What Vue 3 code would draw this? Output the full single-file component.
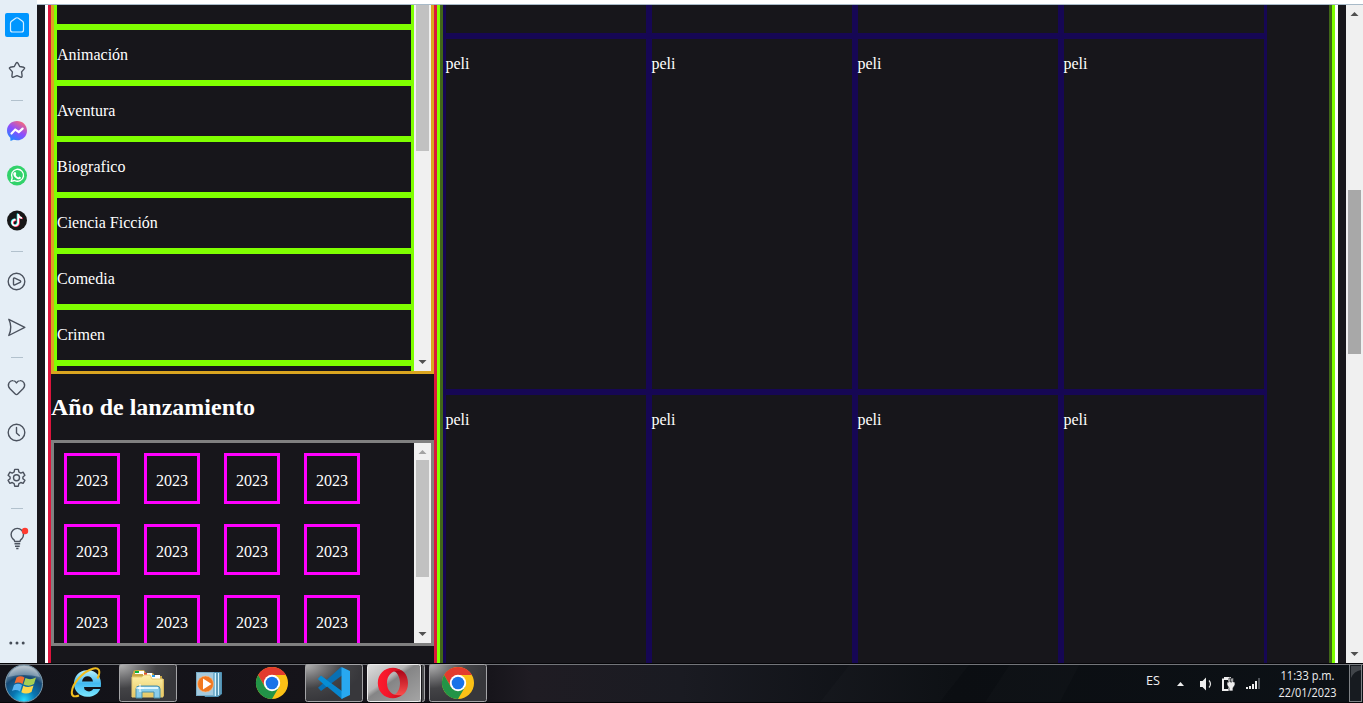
<script setup>
const genres = ['Animación', 'Aventura', 'Biografico', 'Ciencia Ficción', 'Comedia', 'Crimen']
const years = Array(12).fill('2023')
const movies = Array(8).fill('peli')
</script>

<template>
  <div class="screen">
    <div class="browser">
      <nav class="side">
        <svg width="37" height="663" viewBox="0 0 37 663" fill="none" stroke="#4b525e" stroke-width="1.4" stroke-linejoin="round" stroke-linecap="round">
          <defs>
            <linearGradient id="msg" x1="0.2" y1="1" x2="0.8" y2="0"><stop offset="0" stop-color="#168cff" /><stop offset=".5" stop-color="#8c4dff" /><stop offset="1" stop-color="#ff6a70" /></linearGradient>
          </defs>
          <rect x="5" y="13" width="24" height="24" rx="2" fill="#0096ff" stroke="none" />
          <path d="M10.5 23.2 Q10.5 22 11.5 21.2L15.6 18.2Q17 17.3 18.4 18.2L22.5 21.2Q23.5 22 23.5 23.2V30Q23.5 32 21.5 32H12.5Q10.5 32 10.5 30Z" stroke="#d8efff" stroke-width="1.2" />
          <path d="M16.1 63.1Q17 61.8 17.9 63.1L19.7 66.5L23.8 67.3Q25.2 67.8 24.2 68.9L21.6 71.9L22.1 76Q22 77.7 20.6 77.1L17 75.6L13.4 77.1Q12 77.7 11.9 76L12.4 71.9L9.8 68.9Q8.8 67.8 10.2 67.3L14.3 66.5Z" />
          <path d="M11 100.5H23M11 251.5H23M11 357.5H23M11 508.5H23" stroke="#b2c1cd" stroke-width="1" stroke-linecap="butt" />
          <path d="M17 121C11.3 121 7 125.100 7 130.600C7 133.600 8.300 136 10.300 137.700L10.500 141L13.600 139.800C14.700 140.100 15.800 140.300 17 140.300C22.700 140.300 27 136.200 27 130.700C27 125.100 22.700 121 17 121Z" fill="url(#msg)" stroke="none" />
          <path d="M11.5 133.500L15.200 129.600L18.800 132L22.600 128.600" stroke="#fff" stroke-width="2.200" stroke-linejoin="miter" />
          <circle cx="17" cy="175.500" r="10" fill="#32d26b" stroke="none" />
          <path d="M11.200 181.400L12.200 178A6 6 0 1 1 14.600 180.500Z" stroke="#fff" stroke-width="1.400" />
          <path d="M14.200 172.300L15.500 172L16.300 174L15.700 175Q16.600 176.800 18.400 177.500L19.300 176.600L21 177.600C20.900 179.200 19.200 179.800 17.300 178.900C14.700 177.700 13 175.300 13.300 173.500Z" fill="#fff" stroke="none" />
          <circle cx="17" cy="220.500" r="10" fill="#171718" stroke="none" />
          <g stroke-linecap="butt">
            <path d="M15.600 219.700A3 3 0 1 0 18.200 222.700V214.500Q18.700 217.700 22 218" transform="translate(-.7 -.4)" stroke="#28e6e8" stroke-width="1.600" />
            <path d="M15.600 219.700A3 3 0 1 0 18.200 222.700V214.500Q18.700 217.700 22 218" transform="translate(.8 .5)" stroke="#ff2f59" stroke-width="1.600" />
            <path d="M15.600 219.700A3 3 0 1 0 18.200 222.700V214.500Q18.700 217.700 22 218" stroke="#fff" stroke-width="1.700" />
          </g>
          <circle cx="16.500" cy="281.500" r="8.300" />
          <path d="M13.500 279Q13.500 277.600 14.800 278.200L20.100 280.700Q21.300 281.500 20.100 282.300L14.800 284.900Q13.500 285.400 13.500 284Z" />
          <path d="M8.800 319.300L24.800 327.400L8.800 335.500Q12.800 327.400 8.800 319.300Z" />
          <path d="M16.500 394.600Q15.800 394.600 15 393.800L10 388.700C6.300 384.500 9.800 380.300 13 380.600Q15.200 380.700 16.500 382.900Q17.800 380.700 20 380.600C23.200 380.300 26.700 384.500 23 388.700L18 393.800Q17.200 394.600 16.500 394.600Z" />
          <circle cx="16.500" cy="432.500" r="8.300" /><path d="M16.500 427.500V433L19.300 435.600" />
          <path d="M14.700 469.400H18.300L18.900 472L20.800 473.100L23.100 472.200L24.900 475.300L22.900 477V478.700L24.900 480.300L23.100 483.400L20.800 482.500L18.900 483.600L18.300 486.200H14.700L14.100 483.600L12.200 482.500L9.900 483.400L8.100 480.300L10.100 478.700V477L8.100 475.300L9.900 472.200L12.200 473.100L14.100 472Z" /><circle cx="16.500" cy="477.800" r="3" />
          <path d="M14.700 541.500Q14.700 540.200 12.900 538.900A6.200 6.200 0 1 1 21.700 538.900Q20 540.200 20 541.500Z" /><path d="M14.500 543.800H20.200M15 546.200H19.700M16.200 548.500H18.500" stroke-width="1.400" stroke-linecap="butt" />
          <circle cx="25" cy="531" r="3.200" fill="#ff3b30" stroke="none" />
          <g fill="#454c57" stroke="none"><circle cx="10.800" cy="643" r="1.500" /><circle cx="17" cy="643" r="1.500" /><circle cx="23.200" cy="643" r="1.500" /></g>
        </svg>
      </nav>
      <div class="view">
        <div class="topline"></div>
        <div class="page">
          <div class="layout">
            <aside class="filters">
              <div class="genres">
                <div class="genre-list">
                  <div class="genre partial"></div>
                  <div v-for="g in genres" :key="g" class="genre">{{ g }}</div>
                  <div class="genre"></div>
                </div>
                <div class="bar"><div class="thumb t-genre"></div><svg width="17" height="17"><path d="M4.500 6H12.500L8.500 10Z" fill="#505050" /></svg></div>
              </div>
              <h2>Año de lanzamiento</h2>
              <div class="years">
                <div class="year-grid"><div v-for="(y, i) in years" :key="i" class="year">{{ y }}</div></div>
                <div class="bar"><svg width="17" height="17"><path d="M4.500 11H12.500L8.500 7Z" fill="#a3a3a3" /></svg><div class="thumb t-year"></div><svg class="end" width="17" height="17"><path d="M4.500 6H12.500L8.500 10Z" fill="#505050" /></svg></div>
              </div>
            </aside>
            <main class="movies">
              <div class="grid">
                <div v-for="n in 4" :key="'t' + n" class="movie"></div>
                <div v-for="(m, i) in movies" :key="i" class="movie">{{ m }}</div>
              </div>
            </main>
          </div>
          <div class="bar main-bar"><svg width="17" height="17"><path d="M4.500 11H12.500L8.500 7Z" fill="#505050" /></svg><div class="thumb t-main"></div><svg class="end" width="17" height="17"><path d="M4.500 6H12.500L8.500 10Z" fill="#505050" /></svg></div>
        </div>
      </div>
    </div>

    <footer class="taskbar">
      <svg width="1363" height="40" viewBox="0 663 1363 40">
        <defs>
          <linearGradient id="task" x1="0" x2="1"><stop offset="0" stop-color="#121218" /><stop offset=".36" stop-color="#17151b" /><stop offset=".39" stop-color="#1f1c23" /><stop offset=".5" stop-color="#1a1b22" /><stop offset=".7" stop-color="#0b0e12" /><stop offset="1" stop-color="#0c1116" /></linearGradient>
          <radialGradient id="btn" cx="0" cy="0" r="1"><stop offset="0" stop-color="#b4b4b4" /><stop offset=".35" stop-color="#747476" /><stop offset=".65" stop-color="#434346" /><stop offset="1" stop-color="#37373b" /></radialGradient>
          <linearGradient id="active" x1="0" y1="0" x2="1" y2="1"><stop offset="0" stop-color="#dedede" /><stop offset=".38" stop-color="#b5b5b5" /><stop offset=".46" stop-color="#858586" /><stop offset="1" stop-color="#a5a5a5" /></linearGradient>
          <radialGradient id="orb" cx=".5" cy=".95" r=".9"><stop offset="0" stop-color="#29dcff" /><stop offset=".35" stop-color="#0876b2" /><stop offset=".7" stop-color="#164a76" /><stop offset="1" stop-color="#96a9b7" /></radialGradient>
          <linearGradient id="folder" x2="0" y2="1"><stop stop-color="#fff1a8" /><stop offset="1" stop-color="#e5c765" /></linearGradient>
          <linearGradient id="ie" x2="0" y2="1"><stop stop-color="#b8f2ff" /><stop offset=".5" stop-color="#42baf1" /><stop offset="1" stop-color="#7ce8ff" /></linearGradient>
          <linearGradient id="opera" x1="0" x2="1"><stop stop-color="#ff1b2d" /><stop offset=".4" stop-color="#f3172b" /><stop offset="1" stop-color="#c5111e" /></linearGradient>
          <linearGradient id="opera-face" x2="0" y2="1"><stop stop-color="#a70014" /><stop offset="1" stop-color="#ff5551" /></linearGradient>
          <g id="chrome">
            <circle r="16" fill="#fbc116" />
            <path d="M-13.900 -8A16 16 0 0 1 13.900 -8H0L-7 4Z" fill="#e33b2e" />
            <path d="M-13.900 -8A16 16 0 0 0 0 16L7 4L-7 4Z" fill="#229447" />
            <circle r="8.200" fill="#fff" /><circle r="6.300" fill="#1a73e8" />
          </g>
        </defs>
        <rect y="663" width="1363" height="40" fill="url(#task)" />
        <path d="M850 664L820 702H940L970 664ZM1010 664L985 702H1060L1080 664Z" fill="#fff" opacity=".015" />
        <path d="M0 663.500H1363M0 702.500H1363" stroke="#050508" /><path d="M0 664.500H1363" stroke="#73757a" />

        <circle cx="24" cy="683.500" r="18.500" fill="url(#orb)" stroke="#7c9aac" stroke-width="1" />
        <path d="M8 677A17 17 0 0 1 40 677Q24 673 8 677Z" fill="#fff" opacity=".3" />
        <path d="M16.500 677.500Q20.500 675 24.500 677.500L22.500 684Q18.500 681.500 14.500 683.500Z" fill="#f06b32" />
        <path d="M25.500 678Q30 680.500 36 677.500L34 684Q29 687 23.500 684.500Z" fill="#a5cf54" />
        <path d="M14 685Q18 682.700 22 685L20 691.500Q16 689 12 691Z" fill="#59b4f0" />
        <path d="M23.300 685.700Q28 688.300 33.500 685.500L31.500 692Q26 695 21.300 692.300Z" fill="#ffd64a" />

        <path d="M92.500 690Q89 693 84.500 689.500L84 687H100.800C102.500 676.500 95.500 669.500 87 670.300C78.500 670.500 74 677 74 683.500C74 691 79.500 696.500 87 696.700C93.500 697 98.500 693.500 100.200 688.900H93ZM82 681.500C83 674.500 92 674.500 93 681.500Z" fill="url(#ie)" fill-rule="evenodd" />
        <path d="M97.500 678.500C101.500 670.500 98.500 666.500 92 669C83 672 72.500 683 71.800 692C71.500 697 75 697 79 695.500" fill="none" stroke="#f1bd1e" stroke-width="2" />

        <g stroke="#a4a4a7"><rect x="119.500" y="664.500" width="57" height="37" rx="2" fill="url(#btn)" /><rect x="305.500" y="664.500" width="57" height="37" rx="2" fill="url(#btn)" /><rect x="371.500" y="664.500" width="53" height="37" rx="2" fill="#4b4c4e" /><rect x="367.500" y="664.500" width="53" height="37" rx="2" fill="url(#active)" stroke="#eee" /><rect x="429.500" y="664.500" width="57" height="37" rx="2" fill="url(#btn)" /></g>
        <path d="M421.500 665V702" stroke="#17171a" />

        <path d="M133 673Q133 670 136 670H144L146 673H153L155 676H162V679H164V696H132V675Z" fill="#c9a746" />
        <path d="M135 671H144V674H135ZM143 673H152V677H143ZM151 675H160V679H151Z" fill="#fff" />
        <path d="M135 671H139V673H135Z" fill="#0ab43b" /><path d="M144 673H147V675H144Z" fill="#e64b2e" /><path d="M152 675H155V677H152Z" fill="#2c9be8" />
        <path d="M132 677H142L144 675H150L152 679H163V697H132Z" fill="url(#folder)" stroke="#e8cc74" />
        <path d="M136 698V689Q136 686 139 686H157Q160 686 160 689V698H154V692H142V698Z" fill="#8bcdea" stroke="#478eaa" /><path d="M138 688H158" stroke="#dcf7ff" stroke-width="2" />
        <path d="M140 684V692M136 688H144" stroke="#fff" />

        <path d="M205 672.500H221.500V694L218 696.500H205Z" fill="#82bfdb" stroke="#4e91b4" /><path d="M215.500 673V696M218.500 673V695" stroke="#d7f3ff" /><path d="M217 673V696M220 673V695" stroke="#3c7898" />
        <rect x="196.500" y="672.500" width="17" height="23" fill="#a5cade" stroke="#78adc8" />
        <circle cx="205.500" cy="684" r="8" fill="#f17820" stroke="#ffc28d" stroke-width=".6" /><path d="M203 678.500L211.500 684L203 689.500Z" fill="#fff" />
        <use href="#chrome" transform="translate(272 683)" />
        <path d="M318 679L321 675.800L346 694L342 699Z" fill="#0786ce" />
        <path d="M318 687.700L321 691L346 672.500L341 667Z" fill="#0870b4" />
        <path d="M341.500 667L350 671V695L341.500 699Z" fill="#28a8f0" />
        <path d="M318 679L321 675.800L332 684L326.500 687Z" fill="#078ed5" />
        <path d="M387.500 671.500C395 665.500 408 669 408 683C408 697 395 700.500 387.500 694.500C396 698 400 690 400 683C400 676 396 668 387.500 671.500Z" fill="url(#opera-face)" />
        <path d="M393 667.800C384 667.800 377.800 674.500 377.800 683C377.800 691.500 384 698.200 393 698.200C396.500 698.200 399.500 697 402 694.700C394.500 697 387 692.500 387 683C387 673.500 394.500 669 402 671.300C399.500 669 396.500 667.800 393 667.800Z" fill="url(#opera)" />
        <use href="#chrome" transform="translate(458 683)" />

        <g fill="#eee">
          <text class="lang" x="1146" y="685" textLength="14" lengthAdjust="spacingAndGlyphs">ES</text>
          <path d="M1177 686H1184L1180.500 682Z" />
          <path d="M1200 681H1202.500L1206 677.500V690.500L1202.500 687H1200Z" /><path d="M1209 680.500Q1212 684 1209 687.500" fill="none" stroke="#ddd" stroke-width="1.200" />
          <path d="M1224 677V678.500H1222V691H1233V678.500H1231V677ZM1224 680H1228V689H1224Z" fill-rule="evenodd" /><path d="M1227 682H1229V678H1230.500V682H1232V678H1233.500V682H1235V685L1233 688V691H1229V688L1227 685Z" stroke="#11151a" stroke-width=".7" />
          <path d="M1246 687h2v2h-2zM1249 686h2v3h-2zM1252 684h2v5h-2zM1255 681h2v8h-2z" /><path d="M1258 678h2v11h-2z" fill="#4e5358" />
          <text class="clock" x="1280.500" y="680" textLength="54" lengthAdjust="spacingAndGlyphs">11:33 p.m.</text>
          <text class="clock" x="1278.500" y="697" textLength="58" lengthAdjust="spacingAndGlyphs">22/01/2023</text>
        </g>
        <rect x="1349.500" y="664.500" width="12" height="37" fill="#171b20" stroke="#7e8286" /><path d="M1351 666H1361V670Q1354 671 1351 678Z" fill="#81858a" opacity=".4" />
      </svg>
    </footer>
  </div>
</template>

<style>
html, body { margin: 0; overflow: hidden; }
</style>
<style scoped>
* { box-sizing: border-box; }
.screen { width: 1363px; height: 703px; overflow: hidden; background: #17161b; color: #fff; font: 16px "Liberation Serif", serif; }
.browser { display: flex; height: 663px; }
.side { width: 37px; background: #e5eef6; }
svg { display: block; flex-shrink: 0; }
.view { flex: 1; min-width: 0; }
.topline { height: 5px; background: #fff; border-bottom: 1px solid #a8bac8; }
.page { height: 658px; padding-left: 8px; display: flex; justify-content: space-between; }
.layout { width: 1293px; display: flex; border: solid #fff; border-width: 0 3px; }
.filters { width: 389px; flex-shrink: 0; border: solid crimson; border-width: 0 3px; overflow: hidden; }
.genres { height: 369px; display: flex; border: 3px solid goldenrod; border-top: 0; }
.genre-list { flex: 1; overflow: hidden; }
.genre { height: 56px; border: 3px solid #7fff00; line-height: 50px; }
.partial { height: 22px; border-top: 0; }
.bar { width: 17px; background: #f0f0f0; flex-shrink: 0; display: flex; flex-direction: column; }
.thumb { width: 13px; margin: 0 2px; background: #c1c1c1; }
.t-genre { height: 146px; margin-bottom: 203px; }
.t-year { height: 117px; }
.end { margin-top: auto; }
h2 { font-size: 24px; line-height: 27px; margin: 20px 0 19px; }
.years { height: 206px; display: flex; border: 3px solid #808080; }
.year-grid { flex: 1; overflow: hidden; display: grid; grid-template-columns: repeat(4, 56px); grid-auto-rows: 51px; gap: 20px 24px; padding: 10px; }
.year { border: 3px solid #f0f; line-height: 49px; text-align: center; }
.movies { flex: 1; border: solid #7fff00; border-width: 0 3px; overflow: hidden; }
.grid { height: 100%; border: solid #406618; border-width: 0 3px; display: grid; grid-template-columns: repeat(4, 206px); grid-template-rows: 31px 356px 356px; }
.movie { border: 3px solid #160754; line-height: 50px; text-indent: -0.5px; }
.movie:nth-child(-n+4) { border-top: 0; }
.t-main { height: 164px; margin-top: 168px; background: #a8a8a8; }
.taskbar { height: 40px; }
.lang { font: 12px "Open Sans", sans-serif; }
.clock { font: 12px "Open Sans", sans-serif; }
</style>
